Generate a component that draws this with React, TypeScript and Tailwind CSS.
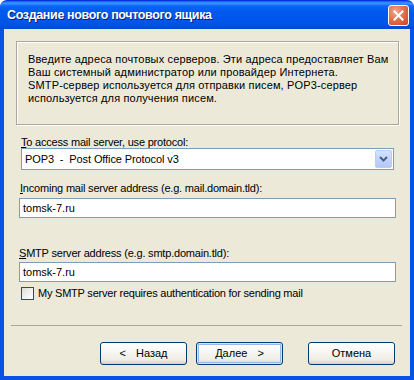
import React from "react";

const font = { fontFamily: '"Liberation Sans", Arial, sans-serif' };

function XPButton({ children, isDefault = false }: { children: React.ReactNode; isDefault?: boolean }) {
  return (
    <button
      className={
        "w-[87px] h-[23px] rounded-[3px] border border-[#003C74] text-[11px] text-black flex items-center justify-center bg-[linear-gradient(to_bottom,#FFFFFF_0%,#F7F7F4_40%,#EEEDE5_80%,#D6D0C5_100%)] " +
        (isDefault
          ? "shadow-[inset_0_0_0_1px_#CEE7FF,inset_0_0_0_2px_#98B8EA]"
          : "")
      }
    >
      {children}
    </button>
  );
}

export default function App() {
  return (
    <div className="w-[414px] h-[380px] flex flex-col bg-white" style={font}>
      {/* Title bar */}
      <div className="h-[29px] shrink-0 rounded-t-[7px] flex items-center pl-[7px] pr-[5px] bg-[linear-gradient(to_bottom,#0A5FF5_0%,#3D95FF_8%,#0A66F6_18%,#0058EE_40%,#0055EA_75%,#0050E0_90%,#0046D5_100%)] border-t border-[#0831D9]">
        <span className="flex-1 text-white font-bold text-[12.5px] tracking-[-0.35px] [text-shadow:1px_1px_0_#0A1E6E]">
          Создание нового почтового ящика
        </span>
        <div className="w-[21px] h-[21px] rounded-[3px] border border-white flex items-center justify-center bg-[radial-gradient(circle_at_35%_30%,#F0A98E_0%,#E3714F_45%,#CC4420_100%)]">
          <svg width="11" height="11" viewBox="0 0 11 11">
            <path d="M1.5 1.5 L9.5 9.5 M9.5 1.5 L1.5 9.5" stroke="white" strokeWidth="2" strokeLinecap="square" />
          </svg>
        </div>
      </div>

      {/* Client area */}
      <div className="flex-1 flex flex-col bg-[#ECE9D8] border-x-4 border-b-4 border-[#0853E6] text-[11px] text-black">
        {/* Info box */}
        <div className="ml-[12px] mt-[12px] w-[383px] h-[84px] border border-[#ACA899] shadow-[inset_1px_1px_0_#FFFFFF,1px_1px_0_#FFFFFF] pl-[11px] pt-[11px] leading-[13px] tracking-[0.15px]">
          <div>Введите адреса почтовых серверов. Эти адреса предоставляет Вам</div>
          <div>Ваш системный администратор или провайдер Интернета.</div>
          <div>SMTP-сервер используется для отправки писем, POP3-сервер</div>
          <div>используется для получения писем.</div>
        </div>

        {/* Protocol */}
        <div className="ml-[17px] mt-[11px] h-[12px] leading-[12px] tracking-[-0.2px]">
          <span className="underline">T</span>o access mail server, use protocol:
        </div>
        <div className="ml-[17px] w-[373px] h-[22px] border border-[#7F9DB9] bg-white flex items-center pl-[3px] pr-[1px]">
          <span className="flex-1 tracking-[-0.1px]">POP3&nbsp; -&nbsp; Post Office Protocol v3</span>
          <div className="w-[17px] h-[18px] rounded-[2px] border border-[#B9CDF9] bg-[linear-gradient(to_bottom,#D5E2FD_0%,#C2D4FA_50%,#B3C8F6_100%)] flex items-center justify-center">
            <svg width="9" height="6" viewBox="0 0 9 6">
              <path d="M1 1 L4.5 4.5 L8 1" stroke="#4D6185" strokeWidth="2" fill="none" />
            </svg>
          </div>
        </div>

        {/* Incoming */}
        <div className="ml-[16px] mt-[12px] h-[12px] leading-[12px] tracking-[-0.2px]">
          <span className="underline">I</span>ncoming mail server address (e.g. mail.domain.tld):
        </div>
        <div className="ml-[15px] mt-[4px] w-[377px] h-[20px] border border-[#7F9DB9] bg-white flex items-center pl-[3px]">
          tomsk-7.ru
        </div>

        {/* SMTP */}
        <div className="ml-[15px] mt-[29px] h-[12px] leading-[12px] tracking-[-0.2px]">
          <span className="underline">S</span>MTP server address (e.g. smtp.domain.tld):
        </div>
        <div className="ml-[15px] mt-[3px] w-[377px] h-[20px] border border-[#7F9DB9] bg-white flex items-center pl-[3px]">
          tomsk-7.ru
        </div>

        {/* Checkbox */}
        <div className="ml-[17px] mt-[5px] flex items-center gap-[4px] h-[13px]">
          <div className="w-[13px] h-[13px] border border-[#1C5180] bg-[linear-gradient(135deg,#DCDCD7_0%,#F0F0EC_50%,#FFFFFF_100%)]" />
          <span className="tracking-[-0.22px]">My SMTP server requires authentication for sending mail</span>
        </div>

        {/* Separator */}
        <div className="ml-[7px] mt-[25px] w-[391px] h-[1px] bg-[#ACA899]" />

        {/* Buttons */}
        <div className="mt-[16px] ml-[96px] flex items-center">
          <XPButton>
            <span className="mr-[10px]">&lt;</span>Назад
          </XPButton>
          <div className="ml-[9px]">
            <XPButton isDefault>
              Далее<span className="ml-[10px]">&gt;</span>
            </XPButton>
          </div>
          <div className="ml-[25px]">
            <XPButton>Отмена</XPButton>
          </div>
        </div>
      </div>
    </div>
  );
}
